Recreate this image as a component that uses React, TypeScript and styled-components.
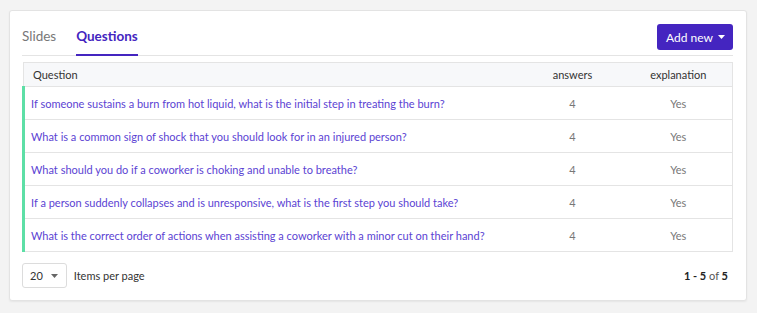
import * as React from "react";
import styled, { createGlobalStyle } from "styled-components";

const PURPLE = "#4425c0";
const LINK = "#5b43d3";
const FONT = `"Lato", "Noto Sans", sans-serif`;

const GlobalStyle = createGlobalStyle`
  html, body {
    margin: 0;
    padding: 0;
    background: #f3f3f3;
    font-family: ${FONT};
  }
`;

interface Question {
  text: string;
  answers: number;
  explanation: string;
}

const questions: Question[] = [
  {
    text: "If someone sustains a burn from hot liquid, what is the initial step in treating the burn?",
    answers: 4,
    explanation: "Yes",
  },
  {
    text: "What is a common sign of shock that you should look for in an injured person?",
    answers: 4,
    explanation: "Yes",
  },
  {
    text: "What should you do if a coworker is choking and unable to breathe?",
    answers: 4,
    explanation: "Yes",
  },
  {
    text: "If a person suddenly collapses and is unresponsive, what is the first step you should take?",
    answers: 4,
    explanation: "Yes",
  },
  {
    text: "What is the correct order of actions when assisting a coworker with a minor cut on their hand?",
    answers: 4,
    explanation: "Yes",
  },
];

const Caret: React.FC<{ color: string }> = ({ color }) => (
  <svg width="7" height="4" viewBox="0 0 7 4">
    <path d="M0 0 L7 0 L3.5 4 Z" fill={color} />
  </svg>
);

const App: React.FC = () => {
  const [tab, setTab] = React.useState("questions");
  return (
    <>
      <GlobalStyle />
      <Page>
        <Card>
          <TopBar>
            <Tabs>
              <Tab $active={tab === "slides"} onClick={() => setTab("slides")}>
                Slides
              </Tab>
              <Tab
                $active={tab === "questions"}
                onClick={() => setTab("questions")}
              >
                Questions
              </Tab>
            </Tabs>
            <AddButton>
              Add new <Caret color="#ffffff" />
            </AddButton>
          </TopBar>
          <Table>
            <colgroup>
              <col />
              <col style={{ width: 104 }} />
              <col style={{ width: 108 }} />
            </colgroup>
            <thead>
              <tr>
                <HeadCell>Question</HeadCell>
                <HeadCell $center>answers</HeadCell>
                <HeadCell $center>explanation</HeadCell>
              </tr>
            </thead>
            <tbody>
              {questions.map((q) => (
                <Row key={q.text}>
                  <QuestionCell>{q.text}</QuestionCell>
                  <Cell $center>{q.answers}</Cell>
                  <Cell $center>{q.explanation}</Cell>
                </Row>
              ))}
            </tbody>
          </Table>
          <Footer>
            <PerPage>
              <Select>
                20 <Caret color="#666666" />
              </Select>
              <span>Items per page</span>
            </PerPage>
            <Range>
              <b>1 - 5</b> of <b>5</b>
            </Range>
          </Footer>
        </Card>
      </Page>
    </>
  );
};

export default App;

const Page = styled.div`
  padding: 10px 10px 12px 9px;
`;
const Card = styled.div`
  background: #ffffff;
  border: 1px solid #e3e3e3;
  border-radius: 3px;
  box-shadow: 0 1px 2px rgba(0, 0, 0, 0.06);
  padding: 0 13px 12px 12px;
`;
const TopBar = styled.div`
  display: flex;
  justify-content: space-between;
  align-items: flex-start;
  border-bottom: 1px solid #e4e4e4;
  margin-bottom: 6px;
`;
const Tabs = styled.div`
  display: flex;
  gap: 20px;
  padding-top: 16px;
`;
const Tab = styled.div<{ $active?: boolean }>`
  font-size: 13.5px;
  line-height: 18px;
  padding-bottom: 9px;
  cursor: pointer;
  color: ${(p) => (p.$active ? PURPLE : "#777777")};
  font-weight: ${(p) => (p.$active ? 700 : 400)};
  border-bottom: 2px solid ${(p) => (p.$active ? PURPLE : "transparent")};
  margin-bottom: -1px;
`;
const AddButton = styled.button`
  display: flex;
  align-items: center;
  gap: 5px;
  margin-top: 13px;
  height: 26px;
  padding: 0 8px 0 9px;
  border: none;
  border-radius: 3px;
  background: ${PURPLE};
  color: #ffffff;
  font-family: ${FONT};
  font-size: 12px;
  font-weight: 400;
`;
const Table = styled.table`
  width: 100%;
  table-layout: fixed;
  border-collapse: collapse;
  border: 1px solid #e4e4e4;
  font-size: 11px;
`;
const HeadCell = styled.th<{ $center?: boolean }>`
  height: 23px;
  padding: 0 9px;
  background: #f7f8fa;
  color: #333333;
  font-weight: 400;
  text-align: ${(p) => (p.$center ? "center" : "left")};
  border-bottom: 1px solid #e4e4e4;
`;
const Row = styled.tr`
  border-bottom: 1px solid #e4e4e4;
`;
const Cell = styled.td<{ $center?: boolean }>`
  height: 32px;
  padding: 0 9px;
  color: #777777;
  white-space: nowrap;
  text-align: ${(p) => (p.$center ? "center" : "left")};
`;
const QuestionCell = styled(Cell)`
  color: ${LINK};
  border-left: 3px solid #5ddfa6;
  padding-left: 6px;
`;
const Footer = styled.div`
  display: flex;
  justify-content: space-between;
  align-items: center;
  margin-top: 11px;
  padding-right: 5px;
  font-size: 11px;
  color: #333333;
`;
const PerPage = styled.div`
  display: flex;
  align-items: center;
  gap: 7px;
`;
const Select = styled.div`
  display: flex;
  align-items: center;
  gap: 8px;
  height: 23px;
  padding: 0 8px 0 7px;
  border: 1px solid #dcdcdc;
  border-radius: 3px;
  color: #333333;
`;
const Range = styled.div`
  color: #555555;
  b {
    color: #222222;
    font-weight: 700;
  }
`;
